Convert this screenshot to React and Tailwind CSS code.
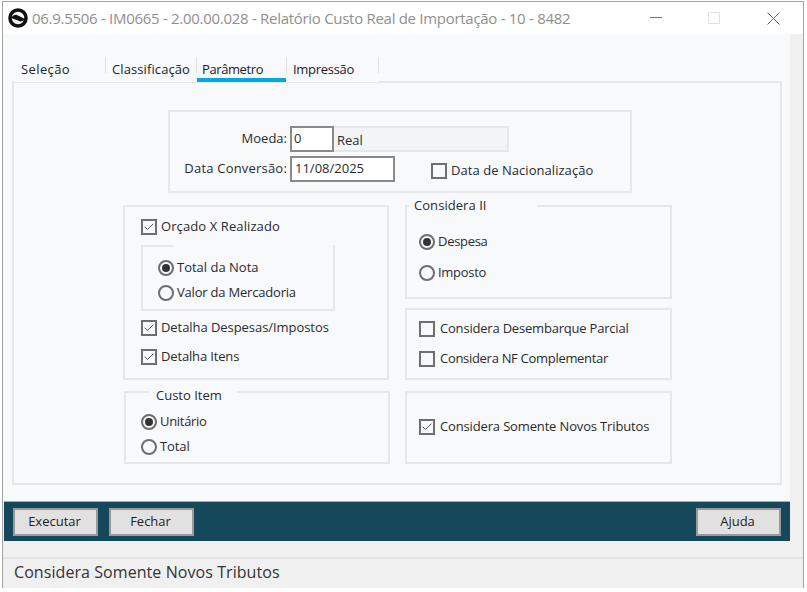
import React from 'react';
import { Check as CheckIcon } from 'lucide-react';

const Check = ({ checked, label, className = '', labelClass = '' }) => (
  <div className={`flex items-center h-[16px] ${className}`}>
    <span className="w-[16px] h-[16px] border-2 border-[#6e6e6e] bg-[#f8f9fb] flex items-center justify-center shrink-0">
      {checked && <CheckIcon size={14} strokeWidth={1.9} className="text-[#4a4a4a]" />}
    </span>
    <span className={`ml-[4px] whitespace-nowrap ${labelClass}`}>{label}</span>
  </div>
);

const Radio = ({ checked, label, className = '', labelClass = '' }) => (
  <div className={`flex items-center h-[16px] ${className}`}>
    <span className="w-[16px] h-[16px] rounded-full border-2 border-[#6e6e6e] flex items-center justify-center shrink-0">
      {checked && <span className="w-[8px] h-[8px] rounded-full bg-[#333]" />}
    </span>
    <span className={`ml-[3px] whitespace-nowrap ${labelClass}`}>{label}</span>
  </div>
);

const Group = ({ title, titleClass = '', className = '', children }) => (
  <div className={`relative border-2 border-[#e6e7e8] ${className}`}>
    {title && <span className={`absolute bg-[#f8f9fb] leading-[16px] ${titleClass}`}>{title}</span>}
    {children}
  </div>
);

const Tab = ({ label, className = '', labelClass = '', active }) => (
  <div className={`h-[31px] pt-[10px] leading-[16px] ${className}`}>
    <span className={`block h-[21px] ${active ? 'border-b-4 border-[#00a8e0] -ml-[5px] pl-[5px]' : ''} ${labelClass}`}>{label}</span>
  </div>
);

const Btn = ({ label }) => (
  <button className="w-[85px] h-[28px] pr-[2px] bg-[#e1e1e1] border-2 border-[#9a9a9a] text-[13px] tracking-normal text-[#222]">{label}</button>
);

const App = () => {
  return (
    <div className="w-[807px] h-[592px] bg-white overflow-hidden text-[13px] text-[#2b2b2b] font-['Open_Sans','Noto_Sans',sans-serif] tracking-[-0.3px]">
      <div className="ml-[2px] mt-[1px] w-[802px] h-[587px] border border-b-0 border-[#a3a3a3] flex flex-col">
        {/* title bar */}
        <div className="h-[32px] shrink-0 bg-white flex items-center pl-[5px] text-[15px] tracking-[-0.29px] text-[#8f8f8f]">
          <svg width="20" height="20" viewBox="0 0 20 20" className="shrink-0">
            <circle cx="10" cy="10" r="8" fill="none" stroke="#111" strokeWidth="3.6" />
            <path d="M3 10 Q6 5 10 7.5 L17 11 Q14 15 10 12.5 Z" fill="#111" />
          </svg>
          <span className="ml-[4px] whitespace-nowrap">06.9.5506 - IM0665 - 2.00.00.028 - Relatório Custo Real de Importação - 10 - 8482</span>
          <svg width="12" height="2" className="ml-[80px] shrink-0"><rect width="12" height="1" fill="#777" /></svg>
          <svg width="12" height="12" className="ml-[46px] shrink-0"><rect x="0.5" y="0.5" width="11" height="11" fill="none" stroke="#e2e2e2" /></svg>
          <svg width="13" height="13" className="ml-[47px] shrink-0"><path d="M0.5 0.5 L12.5 12.5 M12.5 0.5 L0.5 12.5" stroke="#666" strokeWidth="1" /></svg>
        </div>

        <div className="flex-1 bg-[#f0f0f0] flex flex-col">
          <div className="w-[787px] h-[467px] bg-[#f8f9fb] pt-[17px] pl-[9px] shrink-0 relative">
            {/* tabs */}
            <div className="relative z-10 flex h-[31px] bg-[#f8f9fb] w-[365px] ml-[2px] text-[#222]">
              <Tab label="Seleção" className="w-[91px] pl-[7px]" labelClass="tracking-[0.4px]" />
              <span className="w-[1px] h-[16px] mt-[6px] bg-[#e0e0e0]" />
              <Tab label="Classificação" className="w-[90px] pl-[6px]" labelClass="tracking-[0.1px]" />
              <span className="w-[1px] h-[16px] mt-[6px] bg-[#e0e0e0]" />
              <Tab label="Parâmetro" active className="w-[89px] pl-[5px]" labelClass="tracking-[-0.4px]" />
              <span className="w-[1px] h-[16px] mt-[6px] bg-[#e0e0e0]" />
              <Tab label="Impressão" className="w-[91px] pl-[6px]" />
              <span className="w-[1px] h-[16px] mt-[6px] bg-[#e0e0e0]" />
            </div>

            {/* panel */}
            <div className="-mt-[1px] w-[770px] h-[404px] border-2 border-[#e6e7e8] pl-[109px] pt-[27px]">
              <Group className="ml-[45px] w-[464px] h-[83px] pt-[14px] pl-[13px] tracking-normal">
                <div className="flex items-center h-[26px]">
                  <span className="w-[105px] pr-[1px] text-right">Moeda:</span>
                  <span className="ml-[2px] w-[44px] h-[26px] border-2 border-[#8a8a8a] bg-white pl-[2px] leading-[21px]">0</span>
                  <span className="w-[175px] h-[26px] border-2 border-l-0 border-[#e6e7e8] bg-[#f3f4f5] pl-[3px] leading-[24px]">Real</span>
                </div>
                <div className="flex items-center h-[26px] mt-[4px]">
                  <span className="w-[105px] pr-[1px] text-right whitespace-nowrap tracking-[0.2px]">Data Conversão:</span>
                  <span className="ml-[2px] w-[105px] h-[26px] border-2 border-[#8a8a8a] bg-white pl-[3px] leading-[21px]">11/08/2025</span>
                  <Check label="Data de Nacionalização" className="ml-[36px] mt-[4px]" labelClass="tracking-[0.05px]" />
                </div>
              </Group>

              <div className="mt-[12px] grid grid-cols-[267px_267px] gap-x-[15px]">
                <div className="flex flex-col">
                  <Group className="w-[266px] h-[175px] pt-[12px] pl-[16px]">
                    <Check checked label="Orçado X Realizado" labelClass="tracking-[0.1px]" />
                    <div className="relative mt-[10px] w-[194px] h-[66px] border-2 border-[#e6e7e8] pt-[13px] pl-[15px]">
                      <span className="absolute top-[-2px] left-[30px] w-[160px] h-[2px] bg-[#f8f9fb]" />
                      <Radio checked label="Total da Nota" labelClass="tracking-normal" />
                      <Radio label="Valor da Mercadoria" className="mt-[9px]" labelClass="tracking-[-0.2px]" />
                    </div>
                    <Check checked label="Detalha Despesas/Impostos" className="mt-[9px]" labelClass="tracking-[-0.06px]" />
                    <Check checked label="Detalha Itens" className="mt-[13px]" labelClass="tracking-[-0.15px]" />
                  </Group>
                  <Group title="Custo Item" titleClass="top-[-6px] left-[23px] pl-[7px] pr-[15px] tracking-normal" className="ml-[1px] mt-[11px] w-[266px] h-[73px] pt-[21px] pl-[15px]">
                    <Radio checked label="Unitário" />
                    <Radio label="Total" className="mt-[9px]" labelClass="tracking-[-0.1px]" />
                  </Group>
                </div>

                <div className="flex flex-col">
                  <Group title="Considera II" titleClass="top-[-10px] left-[2px] pl-[5px] pr-[50px] tracking-[0.05px]" className="h-[94px] pt-[27px] pl-[12px]">
                    <Radio checked label="Despesa" />
                    <Radio label="Imposto" className="mt-[15px]" />
                  </Group>
                  <Group className="mt-[9px] h-[72px] pt-[11px] pl-[12px]">
                    <Check label="Considera Desembarque Parcial" labelClass="pl-[1px] tracking-[-0.2px]" />
                    <Check label="Considera NF Complementar" className="mt-[14px]" labelClass="pl-[1px]" />
                  </Group>
                  <Group className="mt-[11px] h-[73px] pt-[26px] pl-[12px]">
                    <Check checked label="Considera Somente Novos Tributos" labelClass="pl-[1px] tracking-[-0.15px]" />
                  </Group>
                </div>
              </div>
            </div>
          </div>

          {/* button bar */}
          <div className="w-[786px] ml-[1px] h-[40px] shrink-0 bg-[#16485c] border-t border-[#9fb0b8] flex items-center pl-[9px] pr-[9px] gap-[11px]">
            <Btn label="Executar" />
            <Btn label="Fechar" />
            <div className="ml-auto"><Btn label="Ajuda" /></div>
          </div>

          <div className="mt-[16px] flex-1 border-t-2 border-[#e3e3e3] pl-[11px] pt-[2px] text-[16px] tracking-[0.07px] leading-[22px] text-[#333]">
            Considera Somente Novos Tributos
          </div>
        </div>
      </div>
    </div>
  );
};

export default App;
